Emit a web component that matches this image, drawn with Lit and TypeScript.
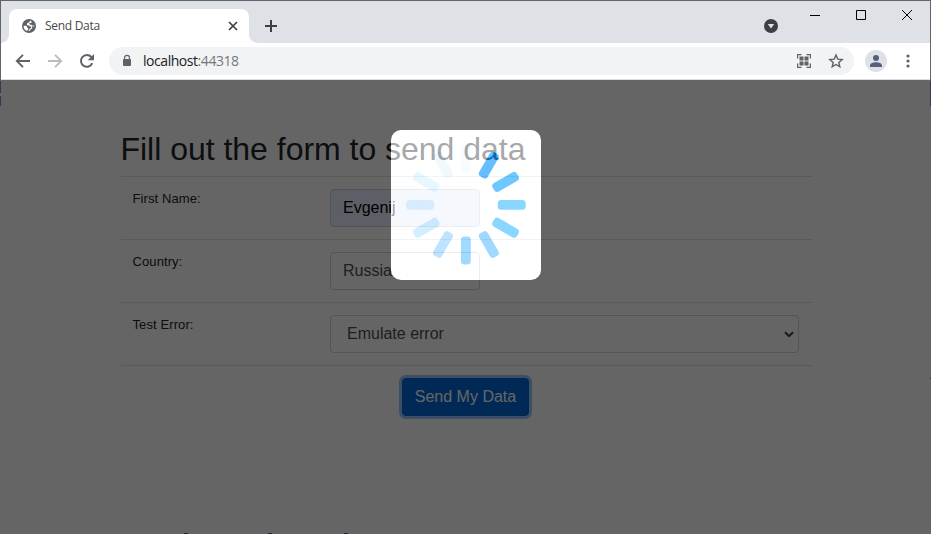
import { LitElement, html, css, svg } from "lit";
import { customElement } from "lit/decorators.js";

const SPOKES = [
  "rgb(245,250,255)",
  "rgb(0,148,255)",
  "rgb(17,163,255)",
  "rgb(60,187,255)",
  "rgb(60,187,255)",
  "rgb(97,192,255)",
  "rgb(100,192,255)",
  "rgb(150,210,255)",
  "rgb(185,228,255)",
  "rgb(203,232,255)",
  "rgb(215,242,255)",
  "rgb(234,246,253)",
];

@customElement("browser-chrome")
class BrowserChrome extends LitElement {
  static styles = css`
    :host { display: block; font-family: "Open Sans", "Noto Sans", sans-serif; }
    svg { display: block; flex: none; }
    .titlebar { display: flex; height: 42px; background: #dee1e6; padding-left: 8px; }
    .tab {
      position: relative; box-sizing: border-box; width: 240px; height: 34px; margin-top: 8px;
      background: #fff; border-radius: 8px 8px 0 0; display: flex; align-items: center;
      padding: 0 9px 0 13px;
    }
    .tab::before, .tab::after { content: ""; position: absolute; bottom: 0; width: 8px; height: 8px; }
    .tab::before { left: -8px; background: radial-gradient(circle at 0 0, transparent 7.5px, #fff 8px); }
    .tab::after { right: -8px; background: radial-gradient(circle at 100% 0, transparent 7.5px, #fff 8px); }
    .title { font-size: 12px; color: #45494d; margin-left: 9px; flex: 1; letter-spacing: -0.3px; line-height: 16px; }
    .plus { margin: 18px 0 0 15px; }
    .gap { flex: 1; }
    .down { margin: 18px 32px 0 0; }
    .controls { display: flex; gap: 36px; margin: 9px 18px 0 0; }
    .toolbar {
      box-sizing: border-box; display: flex; align-items: center; height: 37px;
      background: #fff; border-bottom: 1px solid #dadce0; padding: 0 20px 0 14px;
    }
    .nav { display: flex; gap: 16px; }
    .address {
      flex: 1; height: 28px; border-radius: 14px; background: #f1f3f4; display: flex;
      align-items: center; margin: 0 11px 0 14px; padding: 0 10px 0 13px; box-sizing: border-box;
    }
    .url { flex: 1; font-size: 14px; line-height: 20px; color: #202124; margin-left: 11px; letter-spacing: -0.45px; }
    .port { color: #74787d; }
    .qr { margin-right: 17px; }
    .menu { margin-left: 19px; }
  `;

  render() {
    return html`
      <div class="titlebar">
        <div class="tab">
          <svg width="14" height="14" viewBox="0 0 14 14">
            <circle cx="7" cy="7" r="7" fill="#5f6368" />
            <path d="M8.9 1.7C7.2 1.6 8 3.2 6.8 3.6 5.6 4 4.7 4.6 4.9 5.6c.1.7.9.9 1.7.9.9 0 .9.9 1.8 1 .8.1 1.1.7.7 1.3-.4.7-1.5.5-1.8 1.4-.2.7-.5 1.1-1.1 1.6 1.8.4 3.8-.4 4.9-2 .8-1.1 1.2-2.3 1.1-3.5-.7.6-1.8.6-2.4 0-.5-.6-1.3-.6-2-.7-.7-.2-.9-1.2-.2-1.4.8-.2 1.7 0 1.9-.7.2-.6-.3-1.4-.6-1.8z" fill="#fff" />
            <path d="M1.6 6.9c1 .1 2.4-.3 3.1.3.7.5.2 1.3 1 1.7.7.4.8 1.1.3 1.6-.4.4-.7.9-.9 1.5C3 11.3 1.5 9.3 1.6 6.9z" fill="#fff" />
            <path d="M9.7 7.1l1.2.5 1.5-.2a5.4 5.4 0 0 1-4.7 5c.2-.8.1-1.4.8-1.9.8-.5 1.7-.8 1.7-1.8 0-.6-.5-1.1-.5-1.6z" fill="#5f6368" />
          </svg>
          <span class="title">Send Data</span>
          <svg width="14" height="14" viewBox="0 0 14 14"><path d="M3 3l8 8M11 3l-8 8" stroke="#3c4043" stroke-width="1.7" /></svg>
        </div>
        <svg class="plus" width="14" height="14" viewBox="0 0 14 14"><path d="M7 1v12M1 7h12" stroke="#3c4043" stroke-width="2" /></svg>
        <div class="gap"></div>
        <svg class="down" width="14" height="14" viewBox="0 0 14 14"><circle cx="7" cy="7" r="7" fill="#3c4043" /><path d="M3.8 5h6.4L7 9.4z" fill="#dee1e6" /></svg>
        <div class="controls">
          <svg width="10" height="10" viewBox="0 0 10 10"><path d="M0 5.5h10" stroke="#000" /></svg>
          <svg width="10" height="10" viewBox="0 0 10 10"><path d="M.5.5h9v9h-9z" fill="none" stroke="#000" /></svg>
          <svg width="10" height="10" viewBox="0 0 10 10"><path d="M0 0l10 10M10 0L0 10" stroke="#000" /></svg>
        </div>
      </div>
      <div class="toolbar">
        <div class="nav">
          <svg width="16" height="16" viewBox="0 0 16 16"><path d="M15 8H2.5M8 1.8L1.8 8 8 14.2" fill="none" stroke="#5f6368" stroke-width="1.9" /></svg>
          <svg width="16" height="16" viewBox="0 0 16 16"><path d="M1 8h12.5M8 1.8L14.2 8 8 14.2" fill="none" stroke="#babcbe" stroke-width="1.9" /></svg>
          <svg width="16" height="16" viewBox="0 0 16 16"><path d="M13.3 10.2A5.9 5.9 0 1 1 12.3 4L13 4.8" fill="none" stroke="#5f6368" stroke-width="2" /><path d="M15 1v6.3H8.7z" fill="#5f6368" /></svg>
        </div>
        <div class="address">
          <svg width="10" height="14" viewBox="0 0 10 14"><path d="M2.5 6V3.8a2.5 2.5 0 0 1 5 0V6" fill="none" stroke="#5f6368" stroke-width="1.2" /><rect x="1" y="5" width="8" height="7" rx="1" fill="#5f6368" /></svg>
          <span class="url">localhost<span class="port">:44318</span></span>
          <svg class="qr" width="14" height="14" viewBox="0 0 14 14">
            <path d="M.6 4.5V.6h3.9M9.5.6h3.9v3.9M13.4 9.5v3.9H9.5M4.5 13.4H.6V9.5" fill="none" stroke="#5f6368" stroke-width="1.2" />
            <path d="M2.5 2.5h4v4h-4zM7.5 2.5h4v4h-4zM2.5 7.5h4v4h-4zM7.5 7.5h4v4h-4z" fill="#5f6368" />
            <path d="M6.5 4h1v1.5h-1zM6.5 9h1v1.5h-1zM4 6.5h1.5v1H4zM8.8 6.5h1.5v1H8.8z" fill="#92969a" />
          </svg>
          <svg width="16" height="16" viewBox="0 0 16 16"><path d="M8 2l1.75 4.1 4.45.4-3.4 2.9 1.05 4.4L8 11.5l-3.85 2.3L5.2 9.4 1.8 6.5l4.45-.4z" fill="none" stroke="#5f6368" stroke-width="1.4" /></svg>
        </div>
        <svg width="22" height="22" viewBox="0 0 22 22"><circle cx="11" cy="11" r="11" fill="#dee1e6" /><circle cx="11" cy="8" r="3" fill="#56607a" /><path d="M5 17v-1.6c0-2 3.5-3.2 6-3.2s6 1.2 6 3.2V17z" fill="#56607a" /></svg>
        <svg class="menu" width="4" height="14" viewBox="0 0 4 14"><circle cx="2" cy="2" r="1.6" fill="#5f6368" /><circle cx="2" cy="7" r="1.6" fill="#5f6368" /><circle cx="2" cy="12" r="1.6" fill="#5f6368" /></svg>
      </div>
    `;
  }
}

@customElement("data-form")
class DataForm extends LitElement {
  static styles = css`
    :host { display: block; font-family: "Liberation Sans", Arial, sans-serif; color: #212529; }
    .form { margin: 50px 0 0 119.5px; width: 691px; }
    .heading { margin: 0 0 8px; font-size: 32px; font-weight: 400; line-height: 38px; white-space: nowrap; letter-spacing: -0.02px; }
    .row { display: grid; grid-template-columns: 197.5px 1fr; padding: 12px; border-top: 1px solid #dee2e6; }
    .label { font-size: 13px; line-height: 19px; letter-spacing: 0.1px; }
    .control {
      box-sizing: border-box; width: 150px; height: 38px; border: 1px solid #ced4da; border-radius: 4px;
      padding: 6px 12px; font-size: 16px; line-height: 24px; color: #495057; background: #fff;
    }
    .filled { background: #e8f0fe; color: #000; }
    .select { width: 469px; padding: 6px 4px 6px 16px; display: flex; align-items: center; justify-content: space-between; }
    .actions { display: flex; justify-content: center; border-top: 1px solid #dee2e6; padding: 12px 1px 0 0; }
    .button {
      box-sizing: border-box; height: 38px; border: 1px solid #0062cc; border-radius: 4px; background: #0069d9;
      color: #fff; font: 16px/24px "Liberation Sans", Arial, sans-serif; padding: 6px 12px;
      box-shadow: 0 0 0 3px rgba(38, 143, 255, 0.5); white-space: nowrap;
    }
  `;

  render() {
    return html`
      <div class="form">
        <h2 class="heading">Fill out the form to send data</h2>
        <div class="row"><div class="label">First Name:</div><div class="control filled">Evgenij</div></div>
        <div class="row"><div class="label">Country:</div><div class="control">Russia</div></div>
        <div class="row">
          <div class="label">Test Error:</div>
          <div class="control select">
            <span>Emulate error</span>
            <svg width="10" height="7" viewBox="0 0 10 7"><path d="M1 1.2l4 3.9 4-3.9" fill="none" stroke="#343a40" stroke-width="2" /></svg>
          </div>
        </div>
        <div class="actions"><button class="button">Send My Data</button></div>
      </div>
    `;
  }
}

@customElement("app-root")
class AppRoot extends LitElement {
  static styles = css`
    :host { display: block; position: relative; width: 931px; height: 534px; overflow: hidden; }
    .window {
      box-sizing: border-box; height: 534px; border: 1px solid #62656c;
      overflow: hidden; display: flex; flex-direction: column; background: #fff;
    }
    .page { position: relative; flex: 1; overflow: hidden; background: #fff; }
    .loader {
      position: absolute; left: 390px; top: 50px; width: 150px; height: 150px; border-radius: 10px;
      background: #fff; opacity: 0.6; box-shadow: 0 0 0 1200px #000;
    }
    .spinner { display: block; }
    .edge { position: absolute; left: 0; top: 0; pointer-events: none; }
  `;

  render() {
    return html`
      <div class="window">
        <browser-chrome></browser-chrome>
        <div class="page">
          <data-form></data-form>
          <div class="loader">
            <svg class="spinner" width="150" height="150" viewBox="0 0 150 150">
              ${SPOKES.map(
                (fill, i) => svg`<rect x="70" y="15" width="9.8" height="28" rx="3.5" fill=${fill} transform="rotate(${i * 30} 74.9 74.8)" />`
              )}
            </svg>
          </div>
        </div>
      </div>
      <svg class="edge" width="931" height="534" viewBox="0 0 931 534" shape-rendering="crispEdges">
        <path d="M0 81h1v25H0zM930 81h1v25h-1z" fill="#343850" />
        <path d="M0 93h1v3H0z" fill="#6b6a60" />
        <path d="M184 533h4v1h-4z" fill="#40181c" />
        <path d="M268 533h4v1h-4zM344 533h4v1h-4zM930 378h1v1h-1z" fill="#201a68" />
      </svg>
    `;
  }
}
